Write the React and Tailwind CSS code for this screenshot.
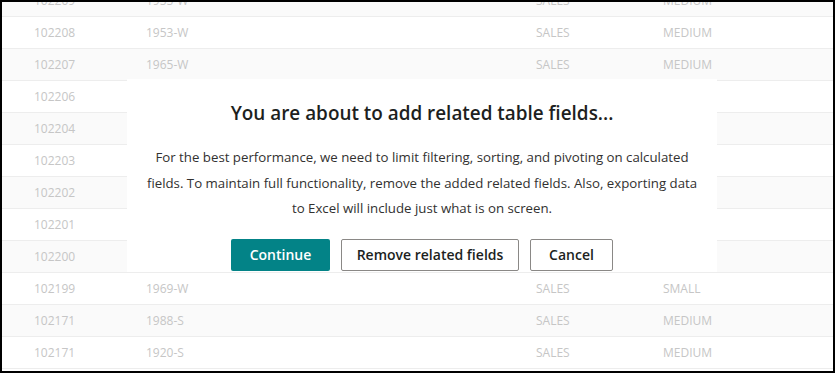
import React from 'react';

// rows 3..8 lie under the dialog, only their id shows at the left edge
const rows = [
  ['102209', '1955-W', 'SALES', 'MEDIUM'],
  ['102208', '1953-W', 'SALES', 'MEDIUM'],
  ['102207', '1965-W', 'SALES', 'MEDIUM'],
  ['102206'],
  ['102204'],
  ['102203'],
  ['102202'],
  ['102201'],
  ['102200'],
  ['102199', '1969-W', 'SALES', 'SMALL'],
  ['102171', '1988-S', 'SALES', 'MEDIUM'],
  ['102171', '1920-S', 'SALES', 'MEDIUM'],
];

export default function App() {
  return (
    <div
      className="relative w-[835px] h-[373px] border-2 border-black overflow-hidden bg-white"
      style={{ fontFamily: '"Open Sans", "Noto Sans", sans-serif' }}
    >
      {/* grid behind the dialog */}
      <div className="flex flex-col -mt-[17px]">
        {rows.map((r, i) => (
          <div
            key={i}
            className={`flex items-center h-[32px] border-b border-[#ededed] text-[12px] text-[#c6c6c6] ${
              i % 2 === 0 ? 'bg-[#fafafa]' : 'bg-white'
            }`}
          >
            <div className="w-[144px] pl-[32px]">{r[0]}</div>
            <div className="w-[390px]">{r[1]}</div>
            <div className="w-[127px]">{r[2]}</div>
            <div>{r[3]}</div>
          </div>
        ))}
      </div>

      {/* dialog */}
      <div className="absolute left-[125px] top-[77px] w-[590px] h-[193px] bg-white flex flex-col items-center pt-[20px] text-[#201f1e]">
        <h2 className="text-[18.9px] leading-[28px] font-semibold">
          You are about to add related table fields...
        </h2>
        <p className="mt-[18px] text-[13.25px] leading-[25.5px] text-center text-[#323130] whitespace-nowrap">
          For the best performance, we need to limit filtering, sorting, and pivoting on calculated
          <br />
          fields. To maintain full functionality, remove the added related fields. Also, exporting data
          <br />
          to Excel will include just what is on screen.
        </p>
        <div className="mt-[17px] flex gap-[11px] text-[14px] font-semibold">
          <button className="w-[99px] h-[32px] rounded-[2px] bg-[#038387] text-white">Continue</button>
          <button className="w-[178px] h-[32px] rounded-[2px] border border-[#8a8886] bg-white text-[#201f1e]">
            Remove related fields
          </button>
          <button className="w-[83px] h-[32px] rounded-[2px] border border-[#8a8886] bg-white text-[#201f1e]">
            Cancel
          </button>
        </div>
      </div>
    </div>
  );
}
